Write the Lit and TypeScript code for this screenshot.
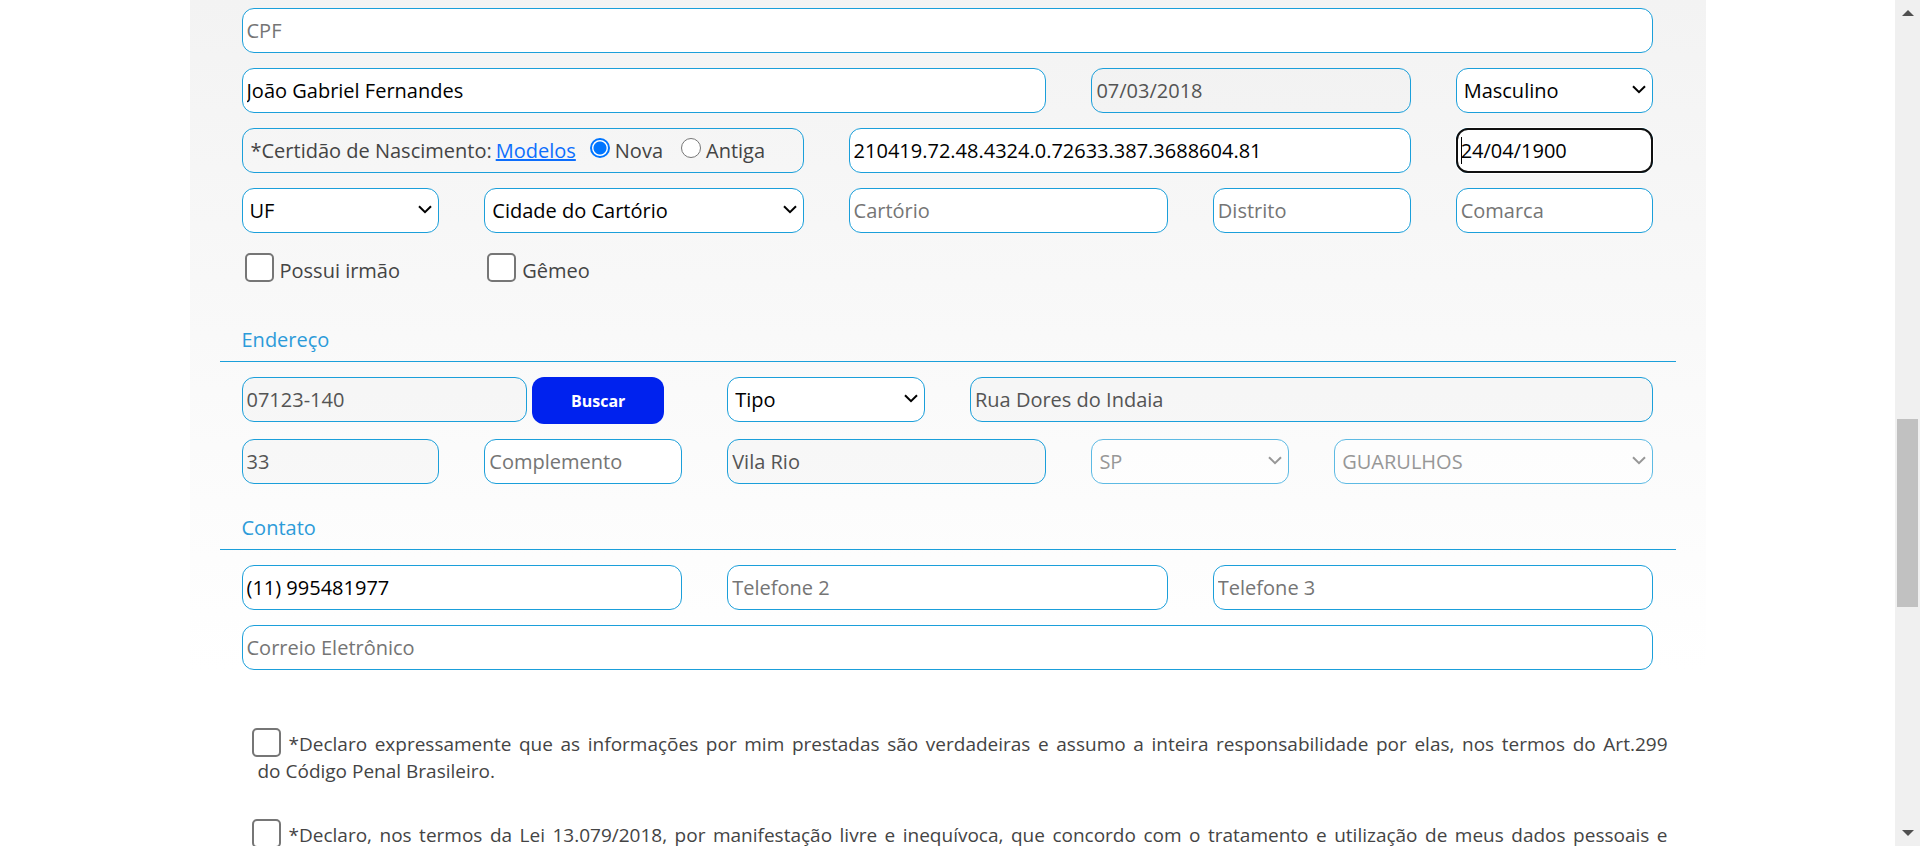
import { LitElement, html, css } from "lit";
import { customElement, property } from "lit/decorators.js";

/** Drop-down with a chevron laid over its right end. */
@customElement("select-field")
export class SelectField extends LitElement {
  @property() label = "";
  @property() value = "";
  @property({ type: Boolean }) disabled = false;

  static styles = css`
    :host {
      display: block;
      min-width: 0;
    }
    .wrap {
      display: grid;
      align-items: center;
    }
    .wrap.disabled {
      opacity: 0.7;
    }
    .select,
    .chevron {
      grid-area: 1 / 1;
    }
    .select {
      appearance: none;
      box-sizing: border-box;
      width: 100%;
      height: 45px;
      margin: 0;
      padding: 0 28px 0 7px;
      border: 1px solid #1b9fda;
      border-radius: 12px;
      background: #fff;
      color: #000;
      font: 20px/27px "Open Sans", sans-serif;
    }
    .select:disabled {
      color: #6d6d6d;
      opacity: 1;
    }
    .chevron {
      justify-self: end;
      width: 14px;
      height: 9px;
      margin: 0 7px 2px 0;
      fill: none;
      stroke: #000;
      stroke-width: 2;
      pointer-events: none;
    }
    .disabled .chevron {
      stroke: #6d6d6d;
    }
  `;

  render() {
    return html`
      <div class="wrap ${this.disabled ? "disabled" : ""}">
        <select class="select" aria-label=${this.label} ?disabled=${this.disabled}>
          <option selected>${this.value}</option>
        </select>
        <svg class="chevron" viewBox="0 0 14 9" aria-hidden="true"><path d="M1 1.2 7 7.2 13 1.2" /></svg>
      </div>
    `;
  }
}

@customElement("app-root")
export class AppRoot extends LitElement {
  static styles = css`
    :host {
      display: grid;
      grid-template-columns: minmax(0, 1fr) 25px;
      height: 100vh;
      overflow: hidden;
      background: #fff;
      color: #444;
      font: 20px/27px "Open Sans", sans-serif;
    }
    .page {
      min-height: 0;
      overflow: hidden;
    }
    .form {
      box-sizing: border-box;
      width: 80%;
      margin: 0 auto;
      padding: 8px 30px 0;
      background: linear-gradient(#f3f3f3, #fff 670px);
    }
    .grid {
      display: grid;
      grid-template-columns: repeat(12, minmax(0, 1fr));
      gap: 15px 45px;
      padding: 0 22px;
    }
    .s2 { grid-column: span 2; }
    .s3 { grid-column: span 3; }
    .s4 { grid-column: span 4; }
    .s5 { grid-column: span 5; }
    .s6 { grid-column: span 6; }
    .s7 { grid-column: span 7; }
    .s10 { grid-column: span 10; }
    .s12 { grid-column: span 12; }

    .input {
      box-sizing: border-box;
      width: 100%;
      min-width: 0;
      height: 45px;
      margin: 0;
      padding: 0 4px;
      border: 1px solid #1b9fda;
      border-radius: 12px;
      background: #fff;
      color: #000;
      font: inherit;
    }
    .input::placeholder {
      color: #757575;
      opacity: 1;
    }
    .input:disabled {
      background: rgba(239, 239, 239, 0.3);
      color: #545454;
    }
    .input.focused {
      outline: 2px solid #101010;
      outline-offset: -2px;
      box-shadow: 0 0 0 1px #fff;
    }
    .caret-box {
      display: grid;
      align-items: center;
    }
    .caret-box .input,
    .caret {
      grid-area: 1 / 1;
    }
    .caret {
      width: 1px;
      height: 27px;
      margin-left: 5px;
      background: #000;
    }

    .certificate {
      box-sizing: border-box;
      display: flex;
      align-items: center;
      height: 45px;
      padding: 0 8px;
      border: 1px solid #1b9fda;
      border-radius: 12px;
      white-space: nowrap;
    }
    .link {
      margin: 0 14px 0 4px;
      color: #0d6efd;
    }
    .option {
      display: flex;
      align-items: center;
      gap: 5px;
      margin-right: 18px;
    }
    .radio {
      appearance: none;
      box-sizing: border-box;
      width: 20px;
      height: 20px;
      margin: 0 0 6px;
      border: 1px solid #767676;
      border-radius: 50%;
      background: #fff;
    }
    .radio:checked {
      border: 2px solid #0075ff;
      background: radial-gradient(#0075ff 0 6px, #fff 7px);
    }
    .check {
      display: flex;
      align-items: center;
      gap: 6px;
      height: 45px;
      padding-left: 3px;
    }
    .box {
      appearance: none;
      box-sizing: border-box;
      flex: none;
      width: 29px;
      height: 29px;
      margin: 0;
      border: 2px solid #767676;
      border-radius: 5px;
      background: #fff;
    }
    .check .box {
      margin-bottom: 6px;
    }

    .heading {
      margin: 0 0 15px;
      padding: 30px 22px 8px;
      border-bottom: 1px solid #1b9fda;
      color: #2c9bd9;
      font: inherit;
    }
    .heading.first {
      padding-top: 33px;
    }
    .search {
      display: flex;
      align-items: flex-start;
      gap: 5px;
    }
    .cep {
      flex: 1;
    }
    .button {
      flex: none;
      width: 132px;
      height: 47px;
      margin-right: 18px;
      padding: 0;
      border: 0;
      border-radius: 12px;
      background: #0022ee;
      color: #fff;
      font: bold 16px/22px "Open Sans", sans-serif;
    }

    .declarations {
      display: grid;
      gap: 34px;
      margin-top: 58px;
      padding: 0 8px 0 38px;
      font-size: 19px;
      text-align: justify;
    }
    .declaration {
      display: block;
      text-indent: -6px;
    }
    .open {
      text-align-last: justify;
    }
    .declaration .box {
      margin-right: 8px;
      vertical-align: -6px;
    }

    .scrollbar {
      display: flex;
      flex-direction: column;
      align-items: center;
      box-sizing: border-box;
      padding: 10px 2px;
      background: #f0f0f0;
    }
    .arrow {
      width: 12px;
      height: 6px;
      fill: #505050;
    }
    .track {
      flex: 1;
      display: grid;
      grid-template-rows: 403fr 188fr 223fr;
      align-self: stretch;
    }
    .thumb {
      grid-row: 2;
      background: #c1c1c1;
    }
  `;

  private text(span: string, label: string, value = "", disabled = false) {
    return html`<input
      class="input ${span}"
      type="text"
      aria-label=${label}
      placeholder=${label}
      .value=${value}
      ?disabled=${disabled}
    />`;
  }

  private select(span: string, label: string, value: string, disabled = false) {
    return html`<select-field class=${span} label=${label} value=${value} ?disabled=${disabled}></select-field>`;
  }

  render() {
    return html`
      <main class="page">
        <form class="form">
          <div class="grid">
            ${this.text("s12", "CPF")}
            ${this.text("s7", "Nome", "João Gabriel Fernandes")}
            ${this.text("s3", "Data de Nascimento", "07/03/2018", true)}
            ${this.select("s2", "Sexo", "Masculino")}
            <div class="certificate s5" role="radiogroup" aria-labelledby="certificate-label">
              <span id="certificate-label">*Certidão de Nascimento:</span>
              <a class="link" href="#modelos">Modelos</a>
              <label class="option"><input class="radio" type="radio" name="certificate" checked />Nova</label>
              <label class="option"><input class="radio" type="radio" name="certificate" />Antiga</label>
            </div>
            ${this.text("s5", "Número da Certidão", "210419.72.48.4324.0.72633.387.3688604.81")}
            <div class="caret-box s2">
              <input class="input focused" type="text" aria-label="Data de Emissão" .value=${"24/04/1900"} />
              <span class="caret"></span>
            </div>
            ${this.select("s2", "UF do Cartório", "UF")}
            ${this.select("s3", "Cidade do Cartório", "Cidade do Cartório")}
            ${this.text("s3", "Cartório")}
            ${this.text("s2", "Distrito")}
            ${this.text("s2", "Comarca")}
            <label class="check s2"><input class="box" type="checkbox" />Possui irmão</label>
            <label class="check s10"><input class="box" type="checkbox" />Gêmeo</label>
          </div>

          <h2 class="heading first">Endereço</h2>
          <div class="grid">
            <div class="search s4">
              <input class="input cep" type="text" aria-label="CEP" .value=${"07123-140"} disabled />
              <button class="button" type="button">Buscar</button>
            </div>
            ${this.select("s2", "Tipo de Logradouro", "Tipo")}
            ${this.text("s6", "Logradouro", "Rua Dores do Indaia", true)}
            ${this.text("s2", "Número", "33", true)}
            ${this.text("s2", "Complemento")}
            ${this.text("s3", "Bairro", "Vila Rio", true)}
            ${this.select("s2", "Estado", "SP", true)}
            ${this.select("s3", "Cidade", "GUARULHOS", true)}
          </div>

          <h2 class="heading">Contato</h2>
          <div class="grid">
            ${this.text("s4", "Telefone 1", "(11) 995481977")}
            ${this.text("s4", "Telefone 2")}
            ${this.text("s4", "Telefone 3")}
            ${this.text("s12", "Correio Eletrônico")}
          </div>

          <div class="declarations">
            <label class="declaration"
              ><input class="box" type="checkbox" />*Declaro expressamente que as informações por mim prestadas são
              verdadeiras e assumo a inteira responsabilidade por elas, nos termos do Art.299 do&nbsp;Código Penal
              Brasileiro.</label
            >
            <label class="declaration open"
              ><input class="box" type="checkbox" />*Declaro, nos termos da Lei 13.079/2018, por manifestação livre e
              inequívoca, que concordo com o tratamento e utilização de meus dados pessoais e</label
            >
          </div>
        </form>
      </main>
      <div class="scrollbar" aria-hidden="true">
        <svg class="arrow" viewBox="0 0 12 6"><path d="M6 0 12 6H0z" /></svg>
        <div class="track"><div class="thumb"></div></div>
        <svg class="arrow" viewBox="0 0 12 6"><path d="M0 0H12L6 6z" /></svg>
      </div>
    `;
  }
}
